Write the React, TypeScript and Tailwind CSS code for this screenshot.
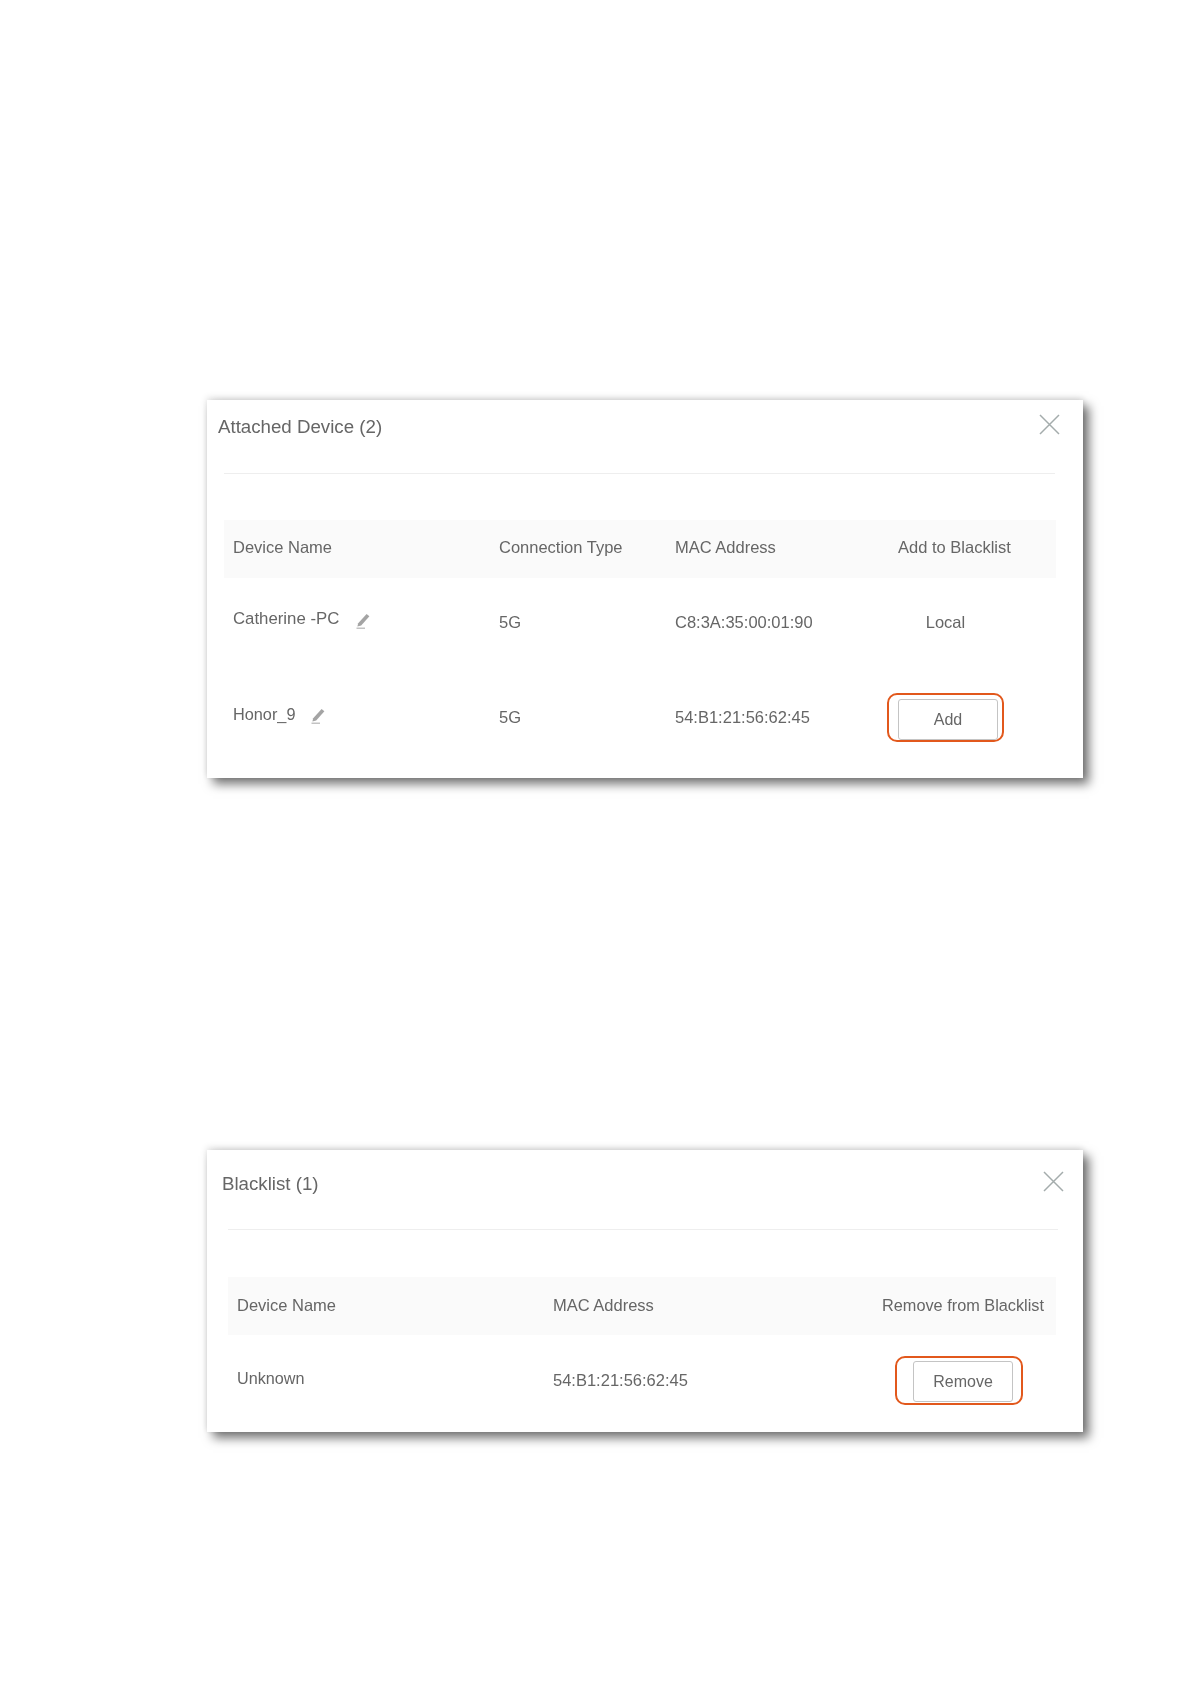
const cellText = "text-[16.5px] text-[#666666]";

function PencilIcon() {
  return (
    <svg width="14" height="16" viewBox="0 0 14 16" fill="none" className="shrink-0 mt-[3px]">
      <path d="M2.2 10.2 10.6 1 13.4 3.2 5.2 12.4 1.4 13.6Z" fill="#a4a4a4" />
      <path d="M0.5 15.2h8.5" stroke="#b4b4b4" strokeWidth="1.2" />
    </svg>
  );
}

function CloseIcon() {
  return (
    <svg width="21" height="21" viewBox="0 0 21 21" fill="none" className="shrink-0">
      <path d="M1 1 20 20M20 1 1 20" stroke="#a4acac" strokeWidth="1.5" />
    </svg>
  );
}

function ActionButton({ label }: { label: string }) {
  return (
    <button className="w-[100px] h-[41px] rounded-[3px] border-[1.5px] border-[#c4c4c4] bg-white text-[16px] text-[#666666]">
      {label}
    </button>
  );
}

function AttachedCard() {
  return (
    <div className="w-[876px] h-[378px] bg-white shadow-[6px_6px_10px_rgba(0,0,0,0.55),0_-2px_7px_rgba(0,0,0,0.14)]">
      {/* Header */}
      <div className="h-[73px] flex justify-between pl-[11px] pr-[23px] pt-[13px]">
        <h2 className="text-[18.7px] leading-[28px] font-normal text-[#666666]">Attached Device (2)</h2>
        <div className="pt-px"><CloseIcon /></div>
      </div>
      <div className="ml-[17px] w-[831px] h-px bg-[#eeeeee]" />

      {/* Table */}
      <div className="ml-[17px] w-[832px] mt-[46px]">
        <div className={`grid grid-cols-[275px_176px_212px_1fr] items-center h-[58px] pb-[4px] bg-[#fafafa] ${cellText}`}>
          <span className="pl-[9px]">Device Name</span>
          <span>Connection Type</span>
          <span>MAC Address</span>
          <span className="pl-[11px]">Add to Blacklist</span>
        </div>
        <div className={`grid grid-cols-[275px_176px_212px_1fr] items-center h-[88px] ${cellText}`}>
          <div className="flex items-center gap-[17px] pl-[9px] mb-[6px]">
            <span className="text-[16.8px]">Catherine -PC</span>
            <PencilIcon />
          </div>
          <span>5G</span>
          <span>C8:3A:35:00:01:90</span>
          <span className="w-[117px] text-center">Local</span>
        </div>
        <div className={`grid grid-cols-[275px_176px_212px_1fr] items-center h-[112px] pt-[27px] pb-[36px] ${cellText}`}>
          <div className="flex items-center gap-[16px] pl-[9px] mb-[7px]">
            <span className="text-[16.3px]">Honor_9</span>
            <PencilIcon />
          </div>
          <span>5G</span>
          <span>54:B1:21:56:62:45</span>
          <div className="w-[117px] h-[49px] flex items-end justify-end pr-[4px] rounded-[10px] border-2 border-[#e2581c]">
            <ActionButton label="Add" />
          </div>
        </div>
      </div>
    </div>
  );
}

function BlacklistCard() {
  return (
    <div className="w-[876px] h-[282px] bg-white shadow-[6px_6px_10px_rgba(0,0,0,0.55),0_-2px_7px_rgba(0,0,0,0.14)]">
      <div className="h-[79px] flex justify-between pl-[15px] pr-[19px] pt-[20px]">
        <h2 className="text-[18.7px] leading-[28px] font-normal text-[#666666]">Blacklist (1)</h2>
        <div className="pt-px"><CloseIcon /></div>
      </div>
      <div className="ml-[21px] w-[830px] h-px bg-[#eeeeee]" />

      <div className="ml-[21px] w-[828px] mt-[47px]">
        <div className={`grid grid-cols-[325px_1fr_auto] items-center h-[58px] pb-[2px] bg-[#fafafa] pr-[12px] ${cellText}`}>
          <span className="pl-[9px]">Device Name</span>
          <span>MAC Address</span>
          <span className="text-[16.3px]">Remove from Blacklist</span>
        </div>
        <div className={`grid grid-cols-[325px_342px_1fr] items-center h-[97px] pt-[21px] pb-[27px] ${cellText}`}>
          <span className="pl-[9px] mb-[4px] text-[16.2px]">Unknown</span>
          <span>54:B1:21:56:62:45</span>
          <div className="w-[128px] h-[49px] flex items-center justify-end pt-[2px] pr-[8px] rounded-[10px] border-2 border-[#e2581c]">
            <ActionButton label="Remove" />
          </div>
        </div>
      </div>
    </div>
  );
}

export default function App() {
  return (
    <div className="min-h-[1684px] bg-white pt-[400px] pl-[207px] font-['Liberation_Sans',Arial,sans-serif]">
      <div className="flex flex-col gap-[372px] blur-[0.4px]">
        <AttachedCard />
        <BlacklistCard />
      </div>
    </div>
  );
}
